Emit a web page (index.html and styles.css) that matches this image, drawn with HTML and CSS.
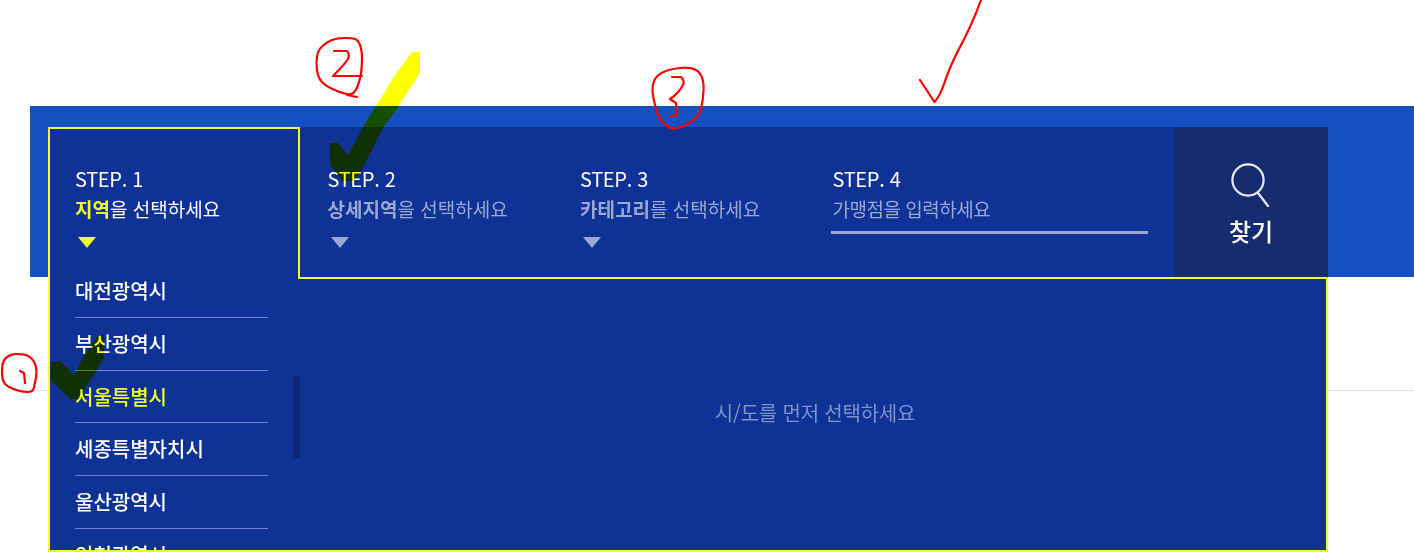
FILE: index.html
```html
<!DOCTYPE html>
<html lang="ko">
<head>
<meta charset="utf-8" />
<title>가맹점 찾기</title>
<link rel="stylesheet" href="styles.css">
</head>

<body>

<div class="search_band">
	<div class="search_panel">
		<div class="step_row">
			<div class="step_tab on">
				<div class="step_num">STEP. 1</div>
				<div class="step_txt"><b>지역</b>을 선택하세요</div>
				<i class="step_arrow"></i>
			</div>
			<div class="step_tab">
				<div class="step_num">STEP. 2</div>
				<div class="step_txt"><b>상세지역</b>을 선택하세요</div>
				<i class="step_arrow"></i>
			</div>
			<div class="step_tab">
				<div class="step_num">STEP. 3</div>
				<div class="step_txt"><b>카테고리</b>를 선택하세요</div>
				<i class="step_arrow"></i>
			</div>
			<div class="step_tab step_last">
				<div class="step_num">STEP. 4</div>
				<div class="step_field">가맹점을 입력하세요</div>
			</div>
			<div class="search_btn">
				<svg width="42" height="44" viewBox="0 0 42 44" fill="none" stroke="#e8ebf5" stroke-width="2.2" stroke-linecap="round">
					<circle cx="18" cy="17" r="15.6"/>
					<path d="M28 30 L38 43"/>
				</svg>
				<span>찾기</span>
			</div>
		</div>

		<div class="area_drop">
			<div class="area_col">
				<ul class="area_list">
					<li>대전광역시</li>
					<li>부산광역시</li>
					<li class="on">서울특별시</li>
					<li>세종특별자치시</li>
					<li>울산광역시</li>
					<li>인천광역시</li>
				</ul>
				<div class="area_thumb"></div>
			</div>
			<div class="area_msg">시/도를 먼저 선택하세요</div>
		</div>
	</div>
</div>

<div class="page_line"></div>

<!-- 형광펜 표시 -->
<svg class="mark_layer mark_high" width="1414" height="557" viewBox="0 0 1414 557">
	<polygon fill="#ff0" points="412,52 420,52 420,73 398,107 383,128 360,173 353,181 342,181 330,165 330,143 338,143 348,155 367,120 378,103 393,78"/>
	<polygon fill="#ff0" points="98,335 104,335 104,358 95,373 87,385 80,399 70,399 58,387 51,382 51,362 60,361 68,368 74,376 83,357"/>
</svg>

<!-- 빨간펜 표시 -->
<svg class="mark_layer" width="1414" height="557" viewBox="0 0 1414 557" fill="none" stroke="#f00" stroke-width="2.2" stroke-linecap="round" stroke-linejoin="round">
	<path d="M16,354 Q20,354 24,354.5 Q28,355 31.5,358.5 Q35,362 36,367 Q37,372 36,377.5 Q35,383 34,387.5 Q33,392 28,392 Q23,392 18,390.5 Q13,389 9,387 Q5,385 3.5,381.5 Q2,378 2,371.5 Q2,365 3.5,361.5 Q5,358 8.5,356 Q12,354 16,354"/>
	<path d="M20,371 L24,373 L25,383"/>
	<path d="M344.5,38 Q352,38 355,39 Q358,40 360,45 Q362,50 362,58.5 Q362,67 361,73.5 Q360,80 357.5,86.5 Q355,93 351,94 Q347,95 337,91 Q327,87 322.5,82.5 Q318,78 317,70.5 Q316,63 317,56.5 Q318,50 322.5,46 Q327,42 332,40 Q337,38 344.5,38"/>
	<path d="M347,95 L357,97"/>
	<path d="M334,51 L347,51 Q350,54 348,59 Q344,65 333,76 L362,76"/>
	<path d="M680,68 Q690,67 695,69.5 Q700,72 702,77.5 Q704,83 703.5,91.5 Q703,100 701.5,106.5 Q700,113 696,117.5 Q692,122 684.5,125.5 Q677,129 672.5,128.5 Q668,128 663,122.5 Q658,117 655.5,107 Q653,97 652.5,91 Q652,85 654.5,80 Q657,75 663.5,72 Q670,69 680,68"/>
	<path d="M672,77 L681,77 Q685,81 683,85 Q679,93 670,99 L676,103 L677,115 L670,116"/>
	<path d="M920,80 L934.5,102 Q940,96 944,84 Q950,66 960,47 Q972,25 981,0"/>
</svg>

</body>
</html>
```

FILE: styles.css
```css
*{ margin:0; padding:0; box-sizing:border-box; }
html,body{ background:#fff; }
body{
	height:557px;
	overflow:hidden;
	position:relative;
	font-family:"Noto Sans CJK KR","Noto Sans",sans-serif;
	color:#fff;
}
ul{ list-style:none; }

.search_band{
	height:171px;
	margin:106px 0 0 30px;
	padding:21px 86px 0 18px;
	background:#1550c0;
}
.search_panel{
	position:relative;
	height:150px;
	background:#0f3296;
}
.step_row{
	display:flex;
	align-items:flex-start;
	height:150px;
}
.step_tab{
	position:relative;
	width:252.5px;
	height:150px;
	padding:35px 25px 0;
	border:2px solid transparent;
	border-bottom:0;
}
.step_tab.on{
	z-index:2;
	width:252px;
	margin-right:.5px;
	height:152px;
	border-color:#f0ff2a;
	background:#0f3296;
}
.step_last{
	flex:1;
	padding-right:24px;
}
.step_num{
	font-size:20px;
	line-height:30px;
	letter-spacing:-.3px;
	color:#fff;
}
.step_txt,
.step_field{
	font-size:19px;
	line-height:30px;
	color:#9aa8d4;
}
.step_txt b{ font-weight:700; }
.step_tab.on .step_txt{ color:#fff; }
.step_tab.on .step_txt b{ color:#f0ff2a; }
.step_arrow{
	display:block;
	width:0;
	height:0;
	margin:13px 0 0 3px;
	border-top:11px solid #9aa8d4;
	border-left:9px solid transparent;
	border-right:9px solid transparent;
}
.step_tab.on .step_arrow{ border-top-color:#f0ff2a; }
.step_field{
	height:40px;
	padding:0 0 0 2px;
	margin-left:-2px;
	letter-spacing:-.5px;
	border-bottom:3px solid #9aa8d8;
}
.search_btn{
	display:flex;
	flex-direction:column;
	align-items:center;
	width:154px;
	height:150px;
	padding-top:36px;
	background:#152d70;
	font-size:24px;
	line-height:36px;
	font-weight:500;
}
.search_btn span{ margin-top:6px; }

.area_drop{
	position:absolute;
	top:150px;
	left:0;
	right:0;
	z-index:1;
	display:flex;
	height:275px;
	border:2px solid #f0ff2a;
	background:#0f3296;
	overflow:hidden;
}
.area_col{
	position:relative;
	width:250px;
	height:100%;
	padding-left:25px;
	overflow:hidden;
}
.area_list{ width:193px; }
.area_list li{
	height:52.75px;
	border-bottom:1px solid #6f86cc;
	font-size:20px;
	line-height:52px;
	font-weight:500;
	color:#fff;
}
.area_list li:first-child{
	height:38.75px;
	line-height:24px;
}
.area_list li.on{ color:#f0ff2a; }
.area_thumb{
	position:absolute;
	top:97px;
	right:0;
	width:7px;
	height:82px;
	border-radius:4px;
	background:#0c2670;
}
.area_msg{
	flex:1;
	padding-top:120px;
	text-align:center;
	font-size:20px;
	line-height:28px;
	letter-spacing:-.2px;
	color:#7f93c8;
	margin-left:4px;
}

.page_line{
	height:1px;
	margin:113px 0 0 30px;
	background:#e2e2e2;
}

.mark_layer{
	position:absolute;
	top:0;
	left:0;
	z-index:5;
	pointer-events:none;
}
.mark_high{ mix-blend-mode:multiply; }
```
